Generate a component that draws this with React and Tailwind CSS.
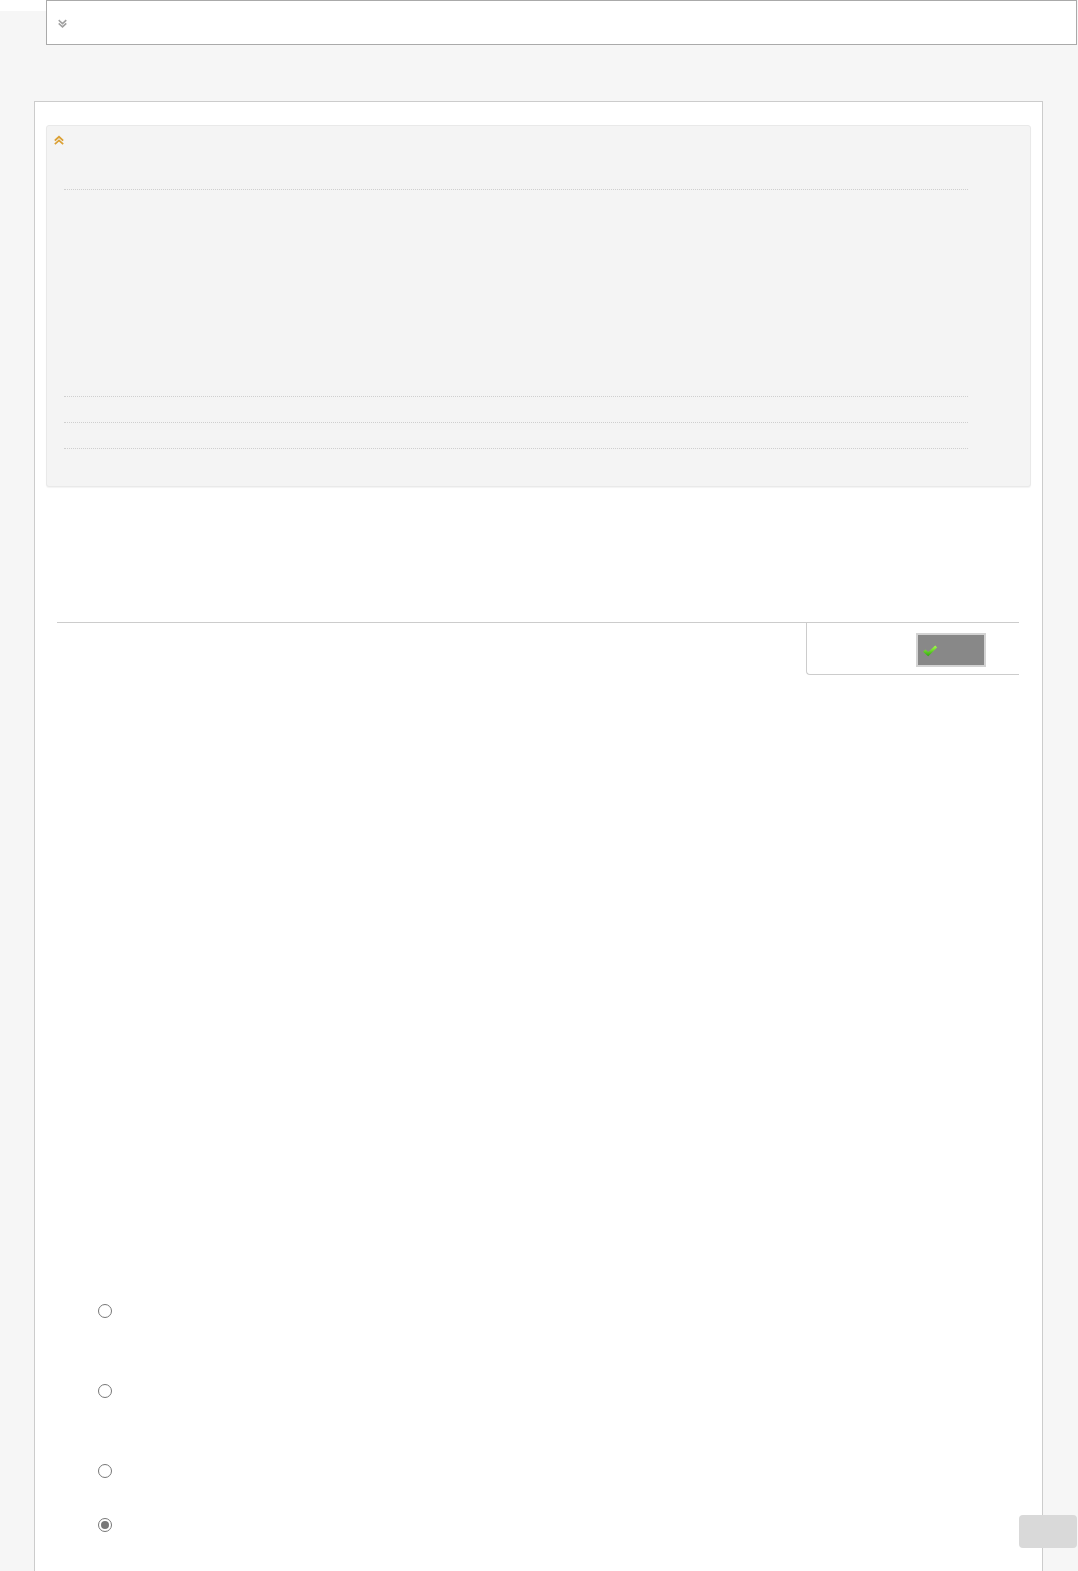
import React from 'react';

const Chevrons = ({ up, color, className }) => (
  <svg viewBox="0 0 10 10" className={className} fill="none" stroke={color} strokeWidth="1.8" strokeLinecap="square">
    {up ? (
      <>
        <path d="M1.5 5 L5 1.8 L8.5 5" />
        <path d="M1.5 8.6 L5 5.4 L8.5 8.6" />
      </>
    ) : (
      <>
        <path d="M1.5 1.4 L5 4.6 L8.5 1.4" />
        <path d="M1.5 5 L5 8.2 L8.5 5" />
      </>
    )}
  </svg>
);

const DotLine = ({ className = '' }) => (
  <div className={`ml-[17px] w-[904px] border-t border-dotted border-[#cfcfcf] ${className}`} />
);

const Radio = ({ checked, className = '' }) => (
  <div className={`w-[14px] h-[14px] rounded-full border border-[#777] bg-white flex items-center justify-center ${className}`}>
    {checked && <div className="w-[8px] h-[8px] rounded-full bg-[#777]" />}
  </div>
);

const App = () => {
  return (
    <div className="relative min-h-[1571px] bg-[#f6f6f6] overflow-hidden" style={{ fontFamily: '"Liberation Sans", Arial, sans-serif' }}>
      <div className="absolute left-0 top-0 w-[46px] h-[11px] bg-white" />

      {/* top bar */}
      <div className="relative ml-[46px] w-[1031px] h-[45px] bg-white border border-[#aaa] flex items-center pl-[11px]">
        <Chevrons color="#a0a0a0" className="w-[9px] h-[10px] mt-[2px]" />
      </div>

      {/* main card */}
      <div className="ml-[34px] mt-[56px] w-[1009px] h-[1480px] bg-white border border-[#ccc] border-b-0 pt-[23px] px-[11px]">
        <div className="h-[362px] bg-[#f4f4f4] border border-[#e9e9e9] rounded-[3px] shadow-[0_1px_1px_rgba(0,0,0,0.05)] pt-[9px]">
          <Chevrons up color="#dba034" className="ml-[7px] w-[10px] h-[10px]" />
          <DotLine className="mt-[44px]" />
          <DotLine className="mt-[206px]" />
          <DotLine className="mt-[25px]" />
          <DotLine className="mt-[25px]" />
        </div>

        <div className="ml-[11px] mt-[135px] w-[962px]">
          <div className="border-t border-[#ccc]" />
          <div className="flex justify-end">
            <div className="w-[213px] h-[52px] border-l border-b border-[#ccc] rounded-bl-[4px] flex items-start pt-[10px] pl-[109px]">
              <button className="w-[70px] h-[34px] bg-[#888] border-2 border-[#d3d3d3] flex items-center pl-[4px] pt-[1px]">
                <svg viewBox="0 0 16 12" className="w-[16px] h-[12px]">
                  <defs>
                    <linearGradient id="ck" x1="0" y1="0" x2="0" y2="1">
                      <stop offset="0" stopColor="#a6ff4a" />
                      <stop offset="1" stopColor="#2ea80c" />
                    </linearGradient>
                  </defs>
                  <path d="M1 6.8 L3.4 4.6 L6.2 7 L13.2 0.6 L15.2 2.6 L6.2 11.2 Z" fill="url(#ck)" />
                </svg>
              </button>
            </div>
          </div>
        </div>

        <div className="ml-[52px] mt-[629px] flex flex-col">
          <Radio />
          <Radio className="mt-[66px]" />
          <Radio className="mt-[66px]" />
          <Radio checked className="mt-[40px]" />
        </div>
      </div>

      {/* scroll-to-top button */}
      <div className="absolute left-[1019px] top-[1515px] w-[58px] h-[33px] rounded-[4px] bg-[#d9d9d9]" />
    </div>
  );
};

export default App;
